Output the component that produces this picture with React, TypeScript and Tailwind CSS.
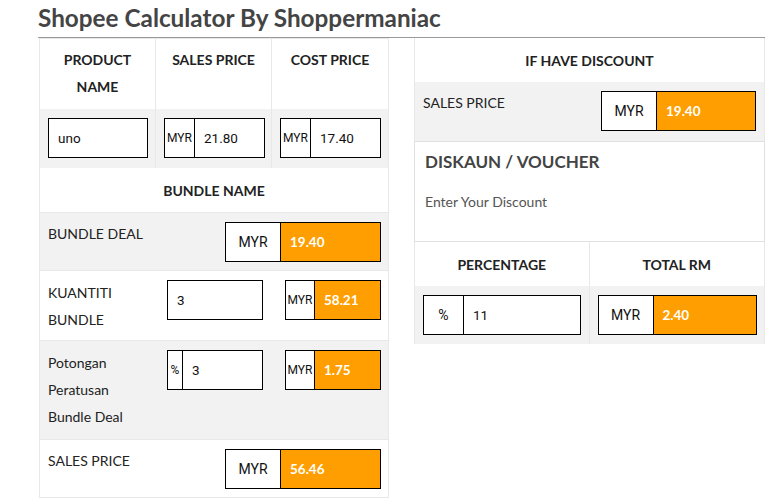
import React from "react";

const F = { fontFamily: "Lato, 'Noto Sans', sans-serif" };
const I = { fontFamily: "Roboto, 'Noto Sans', sans-serif" };

function Box({ pre, val, w, preW, orange, preSize = "text-[14px]", valSize = "text-[13.5px]" }: { pre?: string; val: string; w: number; preW?: number; orange?: boolean; preSize?: string; valSize?: string }) {
  return (
    <div className="flex h-[40px] border border-black bg-white shrink-0" style={{ width: w }}>
      {pre !== undefined && (
        <div className={`flex items-center justify-center border-r border-black text-[#111] ${preSize}`} style={{ width: preW, ...I }}>
          {pre}
        </div>
      )}
      <div
        className={`flex flex-1 items-center pl-[9px] ${valSize} ${orange ? "bg-[#ff9e00] text-white font-bold" : "text-[#111]"}`}
        style={orange ? F : I}
      >
        {val}
      </div>
    </div>
  );
}

export default function App() {
  return (
    <div className="w-[776px] h-[503px] bg-white text-[#222]" style={F}>
      <div className="ml-[38px] w-[727px] h-[38px] border-b border-[#999] flex items-start">
        <h1 className="text-[24.3px] leading-[38px] font-bold text-[#444] -mt-[1px]">Shopee Calculator By Shoppermaniac</h1>
      </div>
      <div className="flex ml-[39px] gap-[25px] items-start">
        {/* Left table */}
        <div className="w-[350px] border border-[#e8e8e8] text-[14px] leading-[27px]">
          <div className="grid grid-cols-3 h-[70px] font-bold text-center">
            <div className="pt-[7px] border-r border-[#e8e8e8]">PRODUCT<br />NAME</div>
            <div className="pt-[7px] border-r border-[#e8e8e8]">SALES PRICE</div>
            <div className="pt-[7px]">COST PRICE</div>
          </div>
          <div className="grid grid-cols-3 h-[59px] bg-[#f2f2f2]">
            <div className="pl-[8px] pt-[9px] border-r border-[#e8e8e8]"><Box val="uno" w={100} /></div>
            <div className="pl-[8px] pt-[9px] border-r border-[#e8e8e8]"><Box pre="MYR" preW={30} val="21.80" w={101} preSize="text-[12px]" /></div>
            <div className="pl-[8px] pt-[9px]"><Box pre="MYR" preW={30} val="17.40" w={101} preSize="text-[12px]" /></div>
          </div>
          <div className="h-[44px] flex items-center justify-center font-bold">BUNDLE NAME</div>
          <div className="h-[58px] bg-[#f2f2f2] flex justify-between pl-[8px] pr-[7px] pt-[9px] border-t border-[#e8e8e8]">
            <div className="-mt-[2px]">BUNDLE DEAL</div>
            <Box pre="MYR" preW={55} val="19.40" w={156} orange />
          </div>
          <div className="h-[70px] flex pl-[8px] pr-[7px] pt-[9px] border-t border-[#e8e8e8]">
            <div className="w-[119px] -mt-[1px]">KUANTITI<br />BUNDLE</div>
            <Box val="3" w={96} />
            <div className="ml-auto"><Box pre="MYR" preW={29} val="58.21" w={96} orange preSize="text-[12px]" /></div>
          </div>
          <div className="h-[99px] bg-[#f2f2f2] flex pl-[8px] pr-[7px] pt-[9px] border-t border-[#e8e8e8]">
            <div className="w-[119px] -mt-[1px]">Potongan<br />Peratusan<br />Bundle Deal</div>
            <Box pre="%" preW={15} val="3" w={96} preSize="text-[12px]" />
            <div className="ml-auto"><Box pre="MYR" preW={29} val="1.75" w={96} orange preSize="text-[12px]" /></div>
          </div>
          <div className="h-[58px] flex justify-between pl-[8px] pr-[7px] pt-[9px] border-t border-[#e8e8e8]">
            <div className="-mt-[2px]">SALES PRICE</div>
            <Box pre="MYR" preW={55} val="56.46" w={156} orange />
          </div>
        </div>
        {/* Right table */}
        <div className="w-[351px] text-[14px] leading-[27px]">
          <div className="border-x border-[#e8e8e8]">
            <div className="h-[44px] flex items-center justify-center font-bold">IF HAVE DISCOUNT</div>
            <div className="h-[59px] bg-[#f2f2f2] flex justify-between pl-[8px] pr-[8px] pt-[9px]">
              <div className="-mt-[2px]">SALES PRICE</div>
              <Box pre="MYR" preW={55} val="19.40" w={155} orange />
            </div>
          </div>
          <div className="h-[101px] border border-[#e0e0e0] px-[10px] pt-[7px]">
            <div className="text-[17px] font-bold text-[#444] leading-[26px]">DISKAUN / VOUCHER</div>
            <div className="text-[14px] text-[#555] mt-[13px]">Enter Your Discount</div>
          </div>
          <div className="grid grid-cols-2 border-x border-[#e8e8e8]">
            <div className="h-[44px] flex items-center justify-center font-bold border-r border-[#e8e8e8]">PERCENTAGE</div>
            <div className="h-[44px] flex items-center justify-center font-bold">TOTAL RM</div>
            <div className="h-[58px] bg-[#f2f2f2] pl-[8px] pt-[9px] border-r border-[#e8e8e8]">
              <Box pre="%" preW={40} val="11" w={158} />
            </div>
            <div className="h-[58px] bg-[#f2f2f2] pl-[8px] pt-[9px]">
              <Box pre="MYR" preW={55} val="2.40" w={159} orange />
            </div>
          </div>
        </div>
      </div>
    </div>
  );
}
